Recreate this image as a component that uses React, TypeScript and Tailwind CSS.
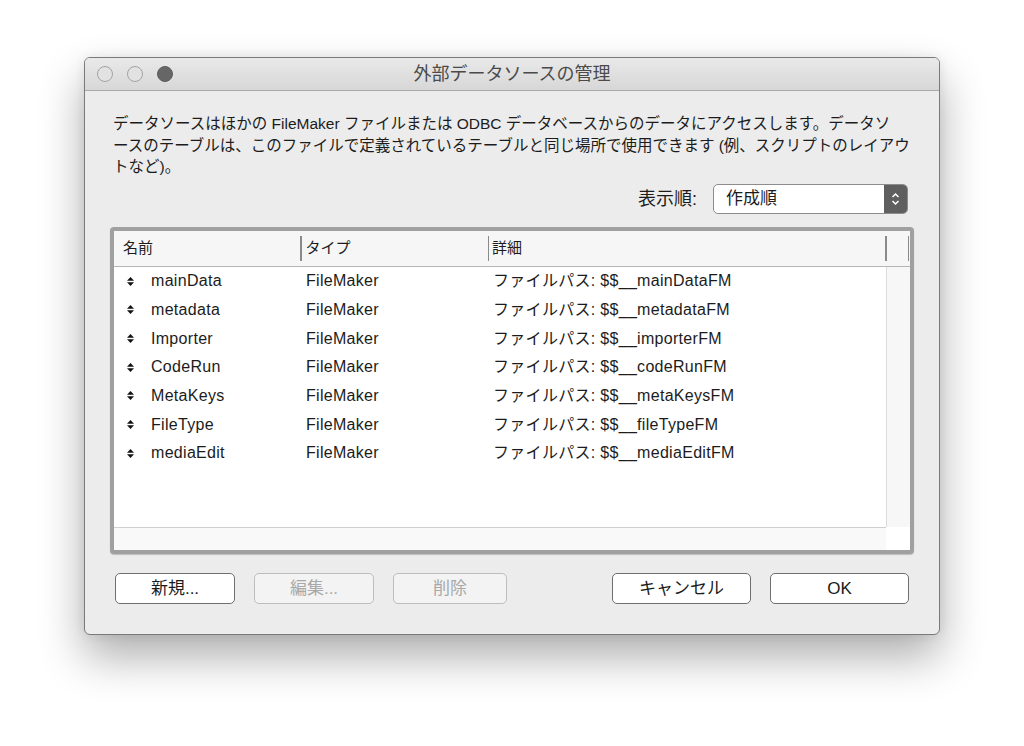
import React from "react";

const rows = [
  ["mainData", "FileMaker", "ファイルパス: $$__mainDataFM"],
  ["metadata", "FileMaker", "ファイルパス: $$__metadataFM"],
  ["Importer", "FileMaker", "ファイルパス: $$__importerFM"],
  ["CodeRun", "FileMaker", "ファイルパス: $$__codeRunFM"],
  ["MetaKeys", "FileMaker", "ファイルパス: $$__metaKeysFM"],
  ["FileType", "FileMaker", "ファイルパス: $$__fileTypeFM"],
  ["mediaEdit", "FileMaker", "ファイルパス: $$__mediaEditFM"],
];

function UpDown() {
  return (
    <svg width="7" height="9" viewBox="0 0 7 9" className="block">
      <polygon points="3.5,0 7,3.8 0,3.8" fill="#111" />
      <polygon points="0,5.2 7,5.2 3.5,9" fill="#111" />
    </svg>
  );
}

function Btn({ label, w, disabled }: { label: string; w: string; disabled?: boolean }) {
  return (
    <div
      className={
        "h-[31px] rounded-[5px] border flex items-center justify-center text-[17px] " +
        w +
        (disabled
          ? " border-[#bdbdbd] bg-[#f3f3f3] text-[#a8a8a8]"
          : " border-[#6f6f6f] bg-white text-[#1a1a1a]")
      }
    >
      {label}
    </div>
  );
}

export default function App() {
  return (
    <div className="w-[1024px] min-h-[746px] bg-white pt-[57px] pl-[84px] font-['Liberation_Sans','Noto_Sans_CJK_JP',sans-serif]">
      <div className="w-[856px] h-[578px] rounded-[6px] border border-[#7a7a7a] bg-[#ececec] overflow-hidden flex flex-col shadow-[0_22px_45px_rgba(0,0,0,0.32),0_0_12px_rgba(0,0,0,0.08)]">
        {/* title bar */}
        <div className="h-[33px] shrink-0 border-b border-[#a9a9a9] bg-gradient-to-b from-[#e9e9e9] to-[#d7d7d7] grid grid-cols-[1fr_auto_1fr] items-center">
          <div className="flex items-center gap-[14px] pl-[12px]">
            <div className="w-[16px] h-[16px] rounded-full border border-[#a3a3a3] bg-[#e2e2e2]" />
            <div className="w-[16px] h-[16px] rounded-full border border-[#a3a3a3] bg-[#e2e2e2]" />
            <div className="w-[16px] h-[16px] rounded-full border border-[#5c5c5c] bg-[#666666]" />
          </div>
          <div className="text-[18px] text-[#4a4a4a] leading-none">外部データソースの管理</div>
          <div />
        </div>

        {/* body */}
        <div className="flex-1 px-[25px] flex flex-col">
          <p className="pt-[22px] pl-[3px] text-[15.5px] leading-[21.5px] text-[#1c1c1c] whitespace-nowrap">
            データソースはほかの FileMaker ファイルまたは ODBC データベースからのデータにアクセスします。データソ
            <br />
            ースのテーブルは、このファイルで定義されているテーブルと同じ場所で使用できます (例、スクリプトのレイアウ
            <br />
            トなど)。
          </p>

          <div className="mt-[6.5px] flex justify-end items-center pr-[6px]">
            <span className="text-[18px] text-[#1c1c1c] mr-[16px]">表示順:</span>
            <div className="w-[195px] h-[30px] rounded-[5px] border border-[#8c8c8c] bg-white flex overflow-hidden">
              <div className="flex-1 flex items-center pl-[12px] text-[17px] text-[#1c1c1c]">作成順</div>
              <div className="w-[23px] bg-[#5f5f5f] flex items-center justify-center">
                <svg width="9" height="14" viewBox="0 0 9 14">
                  <path d="M1.5 5 L4.5 2 L7.5 5" stroke="white" strokeWidth="1.5" fill="none" />
                  <path d="M1.5 9 L4.5 12 L7.5 9" stroke="white" strokeWidth="1.5" fill="none" />
                </svg>
              </div>
            </div>
          </div>

          {/* table frame */}
          <div className="mt-[13px] h-[327px] rounded-[4px] border-4 border-[#a0a0a0] bg-white flex flex-col overflow-hidden shadow-[0_1px_1px_rgba(0,0,0,0.2)]">
            {/* header */}
            <div className="h-[36px] shrink-0 bg-[#f6f6f6] border-b border-[#b5b5b5] flex items-center text-[15px] text-[#1c1c1c]">
              <div className="w-[186px] pl-[9px]">名前</div>
              <div className="w-[1.5px] h-[25px] bg-[#8a8a8a]" />
              <div className="w-[186px] pl-[4px]">タイプ</div>
              <div className="w-[1.5px] h-[25px] bg-[#8a8a8a]" />
              <div className="flex-1 pl-[3px]">詳細</div>
              <div className="w-[1.5px] h-[25px] bg-[#8a8a8a]" />
              <div className="w-[21px]" />
              <div className="w-[1.5px] h-[25px] bg-[#8a8a8a]" />
              <div className="w-[1px]" />
            </div>
            {/* middle */}
            <div className="flex-1 flex">
              <div className="flex-1">
                {rows.map(([n, t, d]) => (
                  <div key={n} className="h-[28.67px] flex items-center text-[16px] text-[#1c1c1c] tracking-[0.3px]">
                    <div className="w-[37px] pl-[13px]">
                      <UpDown />
                    </div>
                    <div className="w-[155px]">{n}</div>
                    <div className="w-[187px]">{t}</div>
                    <div className="flex-1">{d}</div>
                  </div>
                ))}
              </div>
              <div className="w-[24px] bg-[#f7f7f7] border-l border-[#dcdcdc]" />
            </div>
            {/* bottom strip */}
            <div className="h-[23px] shrink-0 flex">
              <div className="flex-1 bg-[#f9f9f9] border-t border-[#cfcfcf]" />
              <div className="w-[24px] bg-white" />
            </div>
          </div>

          {/* buttons */}
          <div className="mt-[19px] flex items-center pl-[5px] pr-[5px]">
            <Btn label="新規..." w="w-[120px]" />
            <div className="w-[19px]" />
            <Btn label="編集..." w="w-[120px]" disabled />
            <div className="w-[19px]" />
            <Btn label="削除" w="w-[114px]" disabled />
            <div className="flex-1" />
            <Btn label="キャンセル" w="w-[139px]" />
            <div className="w-[19px]" />
            <Btn label="OK" w="w-[139px]" />
          </div>
        </div>
      </div>
    </div>
  );
}
